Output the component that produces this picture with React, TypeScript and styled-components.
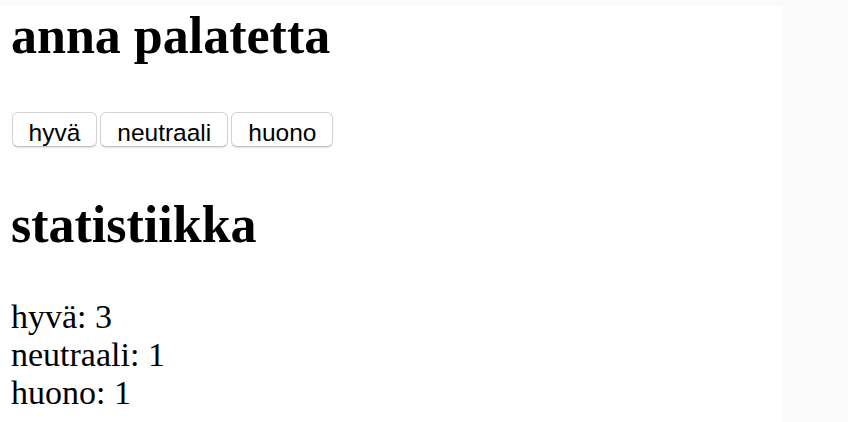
import React, { useState } from 'react'
import { createGlobalStyle, styled } from 'styled-components'

const GlobalStyle = createGlobalStyle`
  html, body {
    margin: 0;
    padding: 0;
    background: #fbfbfb;
  }
`

const Page = styled.div`
  padding-top: 5.6px;
  height: 422px;
  box-sizing: border-box;
  overflow: hidden;
`

const Main = styled.div`
  width: 782px;
  height: 100%;
  background: #ffffff;
  padding-left: 11px;
  box-sizing: border-box;
  display: flex;
  flex-direction: column;
  align-items: flex-start;
  font-family: 'Liberation Serif', 'Times New Roman', serif;
  color: #000;
`

const Heading = styled.h2<{ $top?: number }>`
  font-size: 52px;
  font-weight: bold;
  line-height: normal;
  margin: ${p => p.$top ?? 0}px 0 0;
`

const ButtonRow = styled.div`
  display: flex;
  gap: 3px;
  margin-top: 47.6px;
  padding-left: 0.5px;
`

const Button = styled.button`
  height: 35px;
  box-sizing: border-box;
  padding: 5px 16px 0;
  line-height: 27px;
  font-family: 'Liberation Sans', Arial, sans-serif;
  font-size: 24.5px;
  color: #000;
  background: #fff;
  border: 1px solid #d4d4d4;
  border-bottom-color: #c4c4c4;
  border-radius: 6px;
  box-shadow: 0 1px 1px rgba(0, 0, 0, 0.12);
  cursor: pointer;
`

const Stats = styled.div`
  margin-top: 43.4px;
  font-size: 34px;
  line-height: normal;
`

function App() {
  const [good, setGood] = useState(3)
  const [neutral, setNeutral] = useState(1)
  const [bad, setBad] = useState(1)

  return (
    <>
      <GlobalStyle />
      <Page>
        <Main>
          <Heading>anna palatetta</Heading>
          <ButtonRow>
            <Button onClick={() => setGood(good + 1)}>hyvä</Button>
            <Button onClick={() => setNeutral(neutral + 1)}>neutraali</Button>
            <Button onClick={() => setBad(bad + 1)}>huono</Button>
          </ButtonRow>
          <Heading $top={48}>statistiikka</Heading>
          <Stats>
            <div>hyvä: {good}</div>
            <div>neutraali: {neutral}</div>
            <div>huono: {bad}</div>
          </Stats>
        </Main>
      </Page>
    </>
  )
}

export default App
